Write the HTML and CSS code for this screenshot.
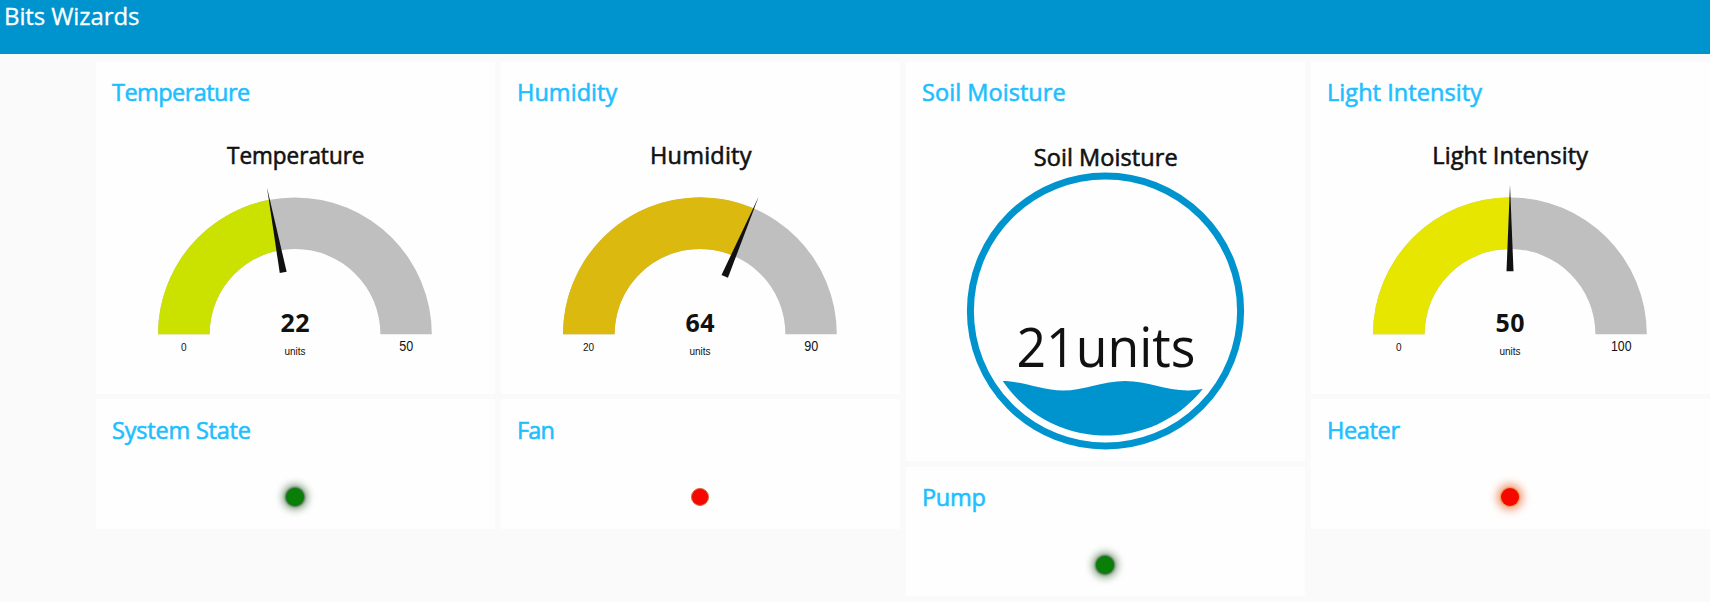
FILE: index.html
```html
<!DOCTYPE html>
<html lang="en">
<head>
<meta charset="utf-8">
<title>Bits Wizards</title>
<link rel="stylesheet" href="styles.css">
</head>
<body>
<header class="topbar"><h1 class="brand">Bits Wizards</h1></header>
<main class="board">
  <div class="column">
    <section class="card gauge-card">
      <h2 class="card-title t-temperature">Temperature</h2>
      <svg class="chart" width="399" height="268" viewBox="0 0 399 268">
        <text class="chart-title" x="131" y="37.5" textLength="137.5" lengthAdjust="spacingAndGlyphs">Temperature</text>
        <path class="track" d="M62 208.3A136.9 136.9 0 0 1 335.8 208.3H284.4A85.4 85.4 0 0 0 113.6 208.3Z"/>
        <path fill="#cbe200" d="M62 208.3A136.9 136.9 0 0 1 173.3 73.8L183 124.4A85.4 85.4 0 0 0 113.6 208.3Z"/>
        <path class="needle" transform="rotate(-10.8 199 208.3)" d="M199 58.8L202.5 145.3H195.5Z"/>
        <text class="value" x="184.6" y="205.5" textLength="29">22</text>
        <text class="small" x="188.5" y="229" textLength="21">units</text>
        <text class="small" x="85" y="225">0</text>
        <text class="max" x="303.3" y="225.2" textLength="14" lengthAdjust="spacingAndGlyphs">50</text>
      </svg>
    </section>
    <section class="card state-card">
      <h2 class="card-title t-system">System State</h2>
      <div class="led-row"><span class="led led-green"></span></div>
    </section>
  </div>
  <div class="column">
    <section class="card gauge-card">
      <h2 class="card-title t-humidity">Humidity</h2>
      <svg class="chart" width="399" height="268" viewBox="0 0 399 268">
        <text class="chart-title" x="149" y="37.5" textLength="101.5">Humidity</text>
        <path class="track" d="M62 208.3A136.9 136.9 0 0 1 335.8 208.3H284.4A85.4 85.4 0 0 0 113.6 208.3Z"/>
        <path fill="#dcb90f" d="M62 208.3A136.9 136.9 0 0 1 252.8 82.4L232.6 129.8A85.4 85.4 0 0 0 113.6 208.3Z"/>
        <path class="needle" transform="rotate(23.1 199 208.3)" d="M199 58.8L202.5 145.3H195.5Z"/>
        <text class="value" x="184.6" y="205.5" textLength="29">64</text>
        <text class="small" x="188.5" y="229" textLength="21">units</text>
        <text class="small" x="82" y="225">20</text>
        <text class="max" x="303.3" y="225.2" textLength="14" lengthAdjust="spacingAndGlyphs">90</text>
      </svg>
    </section>
    <section class="card state-card">
      <h2 class="card-title t-fan">Fan</h2>
      <div class="led-row"><span class="led led-red-off"></span></div>
    </section>
  </div>
  <div class="column column-soil">
    <section class="card soil-card">
      <h2 class="card-title t-soil">Soil Moisture</h2>
      <svg class="chart" width="399" height="335" viewBox="0 0 399 335">
        <text class="chart-title" x="127.7" y="39.9" textLength="144">Soil Moisture</text>
        <circle cx="199.5" cy="185" r="135.1" fill="none" stroke="#0094ce" stroke-width="7"/>
        <path fill="#0094ce" d="M96.7 255.1C117 255.1 136 264.6 157 264.6C178 264.6 197 255 219 255C242 255 259 264.4 282 264.4Q289 264.4 296.8 263.1A124.7 124.7 0 0 1 96.7 255.1Z"/>
        <text class="liquid-value" x="110.5" y="240.5" textLength="179" lengthAdjust="spacingAndGlyphs">21units</text>
      </svg>
    </section>
    <section class="card state-card">
      <h2 class="card-title t-pump">Pump</h2>
      <div class="led-row"><span class="led led-green"></span></div>
    </section>
  </div>
  <div class="column">
    <section class="card gauge-card">
      <h2 class="card-title t-light">Light Intensity</h2>
      <svg class="chart" width="399" height="268" viewBox="0 0 399 268">
        <text class="chart-title" x="121.3" y="37.5" textLength="155.7">Light Intensity</text>
        <path class="track" d="M62 208.3A136.9 136.9 0 0 1 335.8 208.3H284.4A85.4 85.4 0 0 0 113.6 208.3Z"/>
        <path fill="#e6e600" d="M62 208.3A136.9 136.9 0 0 1 199 71.3V122.9A85.4 85.4 0 0 0 113.6 208.3Z"/>
        <path class="needle" d="M199 58.8L202.5 145.3H195.5Z"/>
        <text class="value" x="184.6" y="205.5" textLength="29">50</text>
        <text class="small" x="188.5" y="229" textLength="21">units</text>
        <text class="small" x="85" y="225">0</text>
        <text class="max" x="300" y="225.2" textLength="20.5" lengthAdjust="spacingAndGlyphs">100</text>
      </svg>
    </section>
    <section class="card state-card">
      <h2 class="card-title t-heater">Heater</h2>
      <div class="led-row"><span class="led led-red"></span></div>
    </section>
  </div>
</main>
</body>
</html>
```
FILE: styles.css
```css
* { box-sizing: border-box; }
body {
  margin: 0;
  background: #fafafa;
  color: #111;
  font-family: "Open Sans", "Noto Sans", sans-serif;
  height: 602px;
  overflow: hidden;
}
.topbar { height: 54px; background: #0094ce; padding: 0 4px; }
.brand { margin: 0; color: #fff; font-size: 24px; font-weight: 400; line-height: 32px; letter-spacing: -0.1px; -webkit-text-stroke: 0.3px #fff; }
.board {
  display: grid;
  grid-template-columns: repeat(4, 399px);
  column-gap: 6px;
  align-items: start;
  padding: 8px 0 0 96px;
}
.column { display: flex; flex-direction: column; gap: 5px; }
.column-soil { gap: 6px; }
.card { background: #fefefe; display: flex; flex-direction: column; }
.gauge-card { height: 332px; }
.soil-card { height: 399px; }
.state-card { height: 130px; }
.column-soil .state-card { height: 129px; }
.card-title {
  margin: 0;
  height: 64px;
  flex: none;
  padding: 14px 0 0 16px;
  color: #1fbfff;
  font-size: 23.5px;
  font-weight: 400;
  line-height: 33px;
  -webkit-text-stroke: 0.6px #1fbfff;
}
.state-card .card-title { padding-top: 15px; }
.column-soil .state-card .card-title { padding-top: 14px; }
.t-temperature { letter-spacing: -0.55px; }
.t-humidity, .t-soil, .t-light { letter-spacing: 0.06px; }
.t-system { letter-spacing: -0.2px; }
.t-fan { letter-spacing: -0.9px; }
.t-pump { letter-spacing: -0.3px; }
.t-heater { letter-spacing: -0.35px; }
.chart { display: block; flex: none; }
.chart-title { font-size: 23.5px; fill: #111; stroke: #111; stroke-width: 0.6px; }
.track { fill: #bfbfbf; }
.needle { fill: #111; }
.value { font-size: 25px; font-weight: 700; fill: #111; }
.small { font: 10px "Liberation Sans", sans-serif; fill: #111; }
.max { font: 14px "Liberation Sans", sans-serif; fill: #111; }
.liquid-value { font-size: 55px; font-weight: 400; fill: #111; }
.led-row { display: flex; justify-content: center; padding: 25px 1px 0 0; }
.led { width: 18px; height: 18px; border-radius: 50%; }
.led-green { background: #0a7f08; box-shadow: 0 0 2px 1px #4d6b56, 0 0 9px 3px #6f936b; }
.led-red-off { background: #f60800; border: 1px solid #cf6a35; }
.led-red { background: #f60800; box-shadow: 0 0 1px 1px #e59a45, 0 0 9px 4px #f29a78; }
```
